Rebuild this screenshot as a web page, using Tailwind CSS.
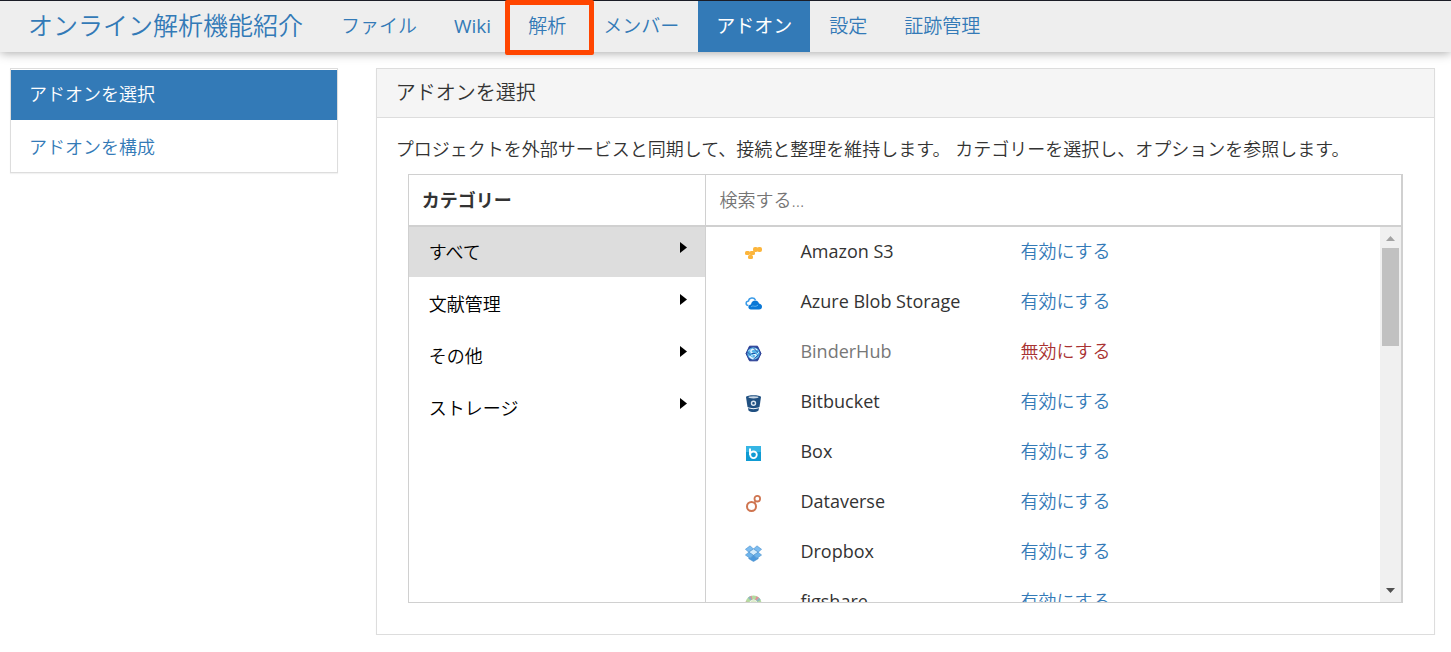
<!DOCTYPE html>
<html lang="ja">
<head>
    <meta charset="UTF-8">
    <meta name="viewport" content="width=device-width, initial-scale=1.0">
    <title>アドオンを選択</title>

    <!-- Tailwind CSS for styling -->
    <script src="https://cdn.jsdelivr.net/npm/@tailwindcss/browser@4"></script>
</head>
<body class="bg-white text-[#333] text-[18px] leading-6 font-[350] font-['Open_Sans','Noto_Sans_CJK_JP',sans-serif]">

    <!-- Project navbar -->
    <header class="relative border-t border-[#1a1c26] bg-[#eee] shadow-[0_1px_10px_rgba(0,0,0,0.35)]">
        <nav class="flex items-stretch h-[51px] text-[#337ab7] text-[19px]">
            <a href="#" class="flex items-center pl-7 pr-5 pb-[3px] text-[25px]">オンライン解析機能紹介</a>
            <div class="flex gap-px">
                <a href="#" class="flex items-center px-[18px] pb-0.5">ファイル</a>
                <a href="#" class="flex items-center px-[18px] pb-0.5 font-normal">Wiki</a>
                <a href="#" class="relative flex items-center px-[18px] pb-0.5">
                    解析
                    <span class="absolute -top-px -bottom-[3px] -left-[5px] -right-[10px] border-5 border-[#ff4500] rounded-xs"></span>
                </a>
                <a href="#" class="flex items-center px-[18px] pb-0.5">メンバー</a>
                <a href="#" class="flex items-center px-[18px] pb-0.5 bg-[#337ab7] text-white font-normal">アドオン</a>
                <a href="#" class="flex items-center px-[18px] pb-0.5">設定</a>
                <a href="#" class="flex items-center px-[18px] pb-0.5">証跡管理</a>
            </div>
        </nav>
    </header>

    <main class="grid grid-cols-[23%_1fr] gap-x-[38px] items-start pl-[10px] pr-4 pt-4">

        <!-- Sidebar -->
        <aside class="border border-[#ddd] pt-px shadow-[0_1px_1px_rgba(0,0,0,0.05)]">
            <a href="#" class="flex items-center h-[50px] px-[18px] pb-0.5 bg-[#337ab7] text-white">アドオンを選択</a>
            <a href="#" class="flex items-center h-[52px] px-[18px] pt-0.5 text-[#337ab7]">アドオンを構成</a>
        </aside>

        <!-- Add-on panel -->
        <section class="border border-[#ddd] shadow-[0_1px_1px_rgba(0,0,0,0.05)]">
            <h1 class="flex items-center h-[49px] px-[19px] bg-[#f5f5f5] border-b border-[#ddd] text-[20px]">アドオンを選択</h1>
            <div class="pt-[19px] pb-[31px] pl-[19px] pr-[31px]">
                <p>プロジェクトを外部サービスと同期して、接続と整理を維持します。 カテゴリーを選択し、オプションを参照します。</p>

                <div class="mt-[13px] ml-3 border border-r-2 border-[#d0d0d0]">
                    <div class="flex h-[52px] border-b-2 border-[#d0d0d0]">
                        <h2 class="flex items-center w-[30%] pl-[13px] font-bold border-r border-[#d0d0d0]">カテゴリー</h2>
                        <input type="text" aria-label="検索する" placeholder="検索する..." class="flex-1 px-[13px] placeholder-[#757575] focus:outline-none">
                    </div>

                    <div class="flex h-[375px]">
                        <!-- Categories -->
                        <ul class="flex flex-col gap-0.5 w-[30%] border-r border-[#d0d0d0] text-black">
                            <li>
                                <a href="#" class="flex items-center justify-between h-[50px] pl-5 pr-[18px] pb-px bg-[#ddd]">すべて
                                    <svg class="w-[7px] h-[11px] mb-2" viewBox="0 0 7 11"><path d="M0 0L7 5.5L0 11Z"/></svg>
                                </a>
                            </li>
                            <li>
                                <a href="#" class="flex items-center justify-between h-[50px] pl-5 pr-[18px] pb-px">文献管理
                                    <svg class="w-[7px] h-[11px] mb-2" viewBox="0 0 7 11"><path d="M0 0L7 5.5L0 11Z"/></svg>
                                </a>
                            </li>
                            <li>
                                <a href="#" class="flex items-center justify-between h-[50px] pl-5 pr-[18px] pb-px">その他
                                    <svg class="w-[7px] h-[11px] mb-2" viewBox="0 0 7 11"><path d="M0 0L7 5.5L0 11Z"/></svg>
                                </a>
                            </li>
                            <li>
                                <a href="#" class="flex items-center justify-between h-[50px] pl-5 pr-[18px] pb-px">ストレージ
                                    <svg class="w-[7px] h-[11px] mb-2" viewBox="0 0 7 11"><path d="M0 0L7 5.5L0 11Z"/></svg>
                                </a>
                            </li>
                        </ul>

                        <!-- Add-on list -->
                        <div class="flex-1 h-full overflow-hidden">
                            <table class="w-full">
                                <tbody>
                                    <tr class="h-[50px]">
                                        <td class="w-[94px] pl-[39px] pt-0.5">
                                            <svg class="w-[17px] h-[17px]" viewBox="0 0 17 17" fill="#fcb53b">
                                                <rect x="8" y="2" width="5" height="5" rx="2"/><rect x="12" y="2" width="5" height="5" rx="2"/>
                                                <rect x="0" y="6" width="5" height="4" rx="1.5"/><rect x="4.5" y="6" width="5.5" height="4" rx="1.5"/>
                                                <rect x="3" y="10" width="5" height="4" rx="1.5"/>
                                            </svg>
                                        </td>
                                        <th scope="row" class="w-[220px] pb-0.5 text-left font-medium">Amazon S3</th>
                                        <td class="pb-0.5"><a href="#" class="text-[#337ab7]">有効にする</a></td>
                                    </tr>
                                    <tr class="h-[50px]">
                                        <td class="pl-[39px] pt-0.5">
                                            <svg class="w-[17px] h-[17px]" viewBox="0 0 17 17">
                                                <path d="M3.5 10.5C.5 10.5 .2 6.5 3.5 6C4 2.5 9 2 10.5 5" fill="#fff" stroke="#3a9be8" stroke-width="1.5"/>
                                                <path d="M6 14.5C2.5 14.5 2.5 10 6 9.5C6.5 4.5 13 4 14 8.5C18 9 18 14.5 14 14.5Z" fill="#0a78d6"/>
                                                <path d="M6 12C8 9.5 10 13 13 10" fill="none" stroke="#5fb4f2"/>
                                            </svg>
                                        </td>
                                        <th scope="row" class="pb-0.5 text-left font-medium">Azure Blob Storage</th>
                                        <td class="pb-0.5"><a href="#" class="text-[#337ab7]">有効にする</a></td>
                                    </tr>
                                    <tr class="h-[50px]">
                                        <td class="pl-[39px] pt-0.5">
                                            <svg class="w-[17px] h-[17px]" viewBox="0 0 17 17">
                                                <path d="M4.5 1.2H12.5L16 8.5L12.5 15.8H4.5L1 8.5Z" fill="#2a3f96" stroke="#2a3f96"/>
                                                <circle cx="8.5" cy="8.5" r="6.2" fill="#55b2e6"/>
                                                <path d="M12 5C8 2.5 4.5 5.5 6.5 7.5S12.5 9 10.5 12S5.5 12.5 4.5 11" fill="none" stroke="#e4f5ff" stroke-width="1.5"/>
                                                <path d="M2.5 7L6 10.5M8.5 3L13.5 8M6.5 8.5L10.5 8.5M8.5 14L13.5 10" stroke="#2456a5" stroke-width="1"/>
                                                <path d="M3.5 6L5 4.5M12 9L14 7M6 10.5L8 11" stroke="#c4e8fa" stroke-width="1"/>
                                            </svg>
                                        </td>
                                        <th scope="row" class="pb-0.5 text-left font-medium text-[#777]">BinderHub</th>
                                        <td class="pb-0.5"><a href="#" class="text-[#a93232]">無効にする</a></td>
                                    </tr>
                                    <tr class="h-[50px]">
                                        <td class="pl-[39px] pt-0.5">
                                            <svg class="w-[17px] h-[17px]" viewBox="0 0 17 17">
                                                <path d="M1 2C2 -.3 15 -.3 16 2L14.5 12C12 13.5 5 13.5 2.5 12Z" fill="#205081"/>
                                                <path d="M3 13C6 14.5 11 14.5 14 13L13.5 15.5C11 17.5 6 17.5 3.5 15.5Z" fill="#205081"/>
                                                <ellipse cx="8.5" cy="2.3" rx="5" ry="1.1" fill="#c9d7e4"/>
                                                <circle cx="8.5" cy="8.3" r="2" fill="#205081" stroke="#dce6ef" stroke-width="1.4"/>
                                            </svg>
                                        </td>
                                        <th scope="row" class="pb-0.5 text-left font-medium">Bitbucket</th>
                                        <td class="pb-0.5"><a href="#" class="text-[#337ab7]">有効にする</a></td>
                                    </tr>
                                    <tr class="h-[50px]">
                                        <td class="pl-[39px] pt-0.5">
                                            <svg class="w-[17px] h-[17px]" viewBox="0 0 17 17">
                                                <rect x="1" y="1" width="15" height="15" fill="#0f9bd3"/>
                                                <rect x="1" y="1" width="15" height="6" fill="#35b5e4"/>
                                                <path d="M5 3.5V10" stroke="#fff" stroke-width="2"/>
                                                <circle cx="8.5" cy="9.8" r="3.3" fill="none" stroke="#fff" stroke-width="1.8"/>
                                            </svg>
                                        </td>
                                        <th scope="row" class="pb-0.5 text-left font-medium">Box</th>
                                        <td class="pb-0.5"><a href="#" class="text-[#337ab7]">有効にする</a></td>
                                    </tr>
                                    <tr class="h-[50px]">
                                        <td class="pl-[39px] pt-0.5">
                                            <svg class="w-[17px] h-[17px]" viewBox="0 0 17 17" fill="none" stroke="#cf7550">
                                                <circle cx="6.5" cy="11.5" r="4.5" stroke-width="2"/>
                                                <circle cx="12.3" cy="3.7" r="2.8" stroke-width="1.8"/>
                                                <path d="M9.3 8L10.5 6.3" stroke-width="1.6"/>
                                            </svg>
                                        </td>
                                        <th scope="row" class="pb-0.5 text-left font-medium">Dataverse</th>
                                        <td class="pb-0.5"><a href="#" class="text-[#337ab7]">有効にする</a></td>
                                    </tr>
                                    <tr class="h-[50px]">
                                        <td class="pl-[39px] pt-0.5">
                                            <svg class="w-[17px] h-[17px]" viewBox="0 0 17 17" stroke="#3f86c4" stroke-width=".5">
                                                <path d="M5 .8L8.5 4L3.8 7.2L.4 4.3Z" fill="#7cbcf0"/>
                                                <path d="M12 .8L8.5 4L13.2 7.2L16.6 4.3Z" fill="#7cbcf0"/>
                                                <path d="M8.5 4L13.2 7.2L8.5 10.4L3.8 7.2Z" fill="#d4ecfc"/>
                                                <path d="M3.8 7.2L8.5 10.4L5 13.3L.4 10Z" fill="#6db4ec"/>
                                                <path d="M13.2 7.2L8.5 10.4L12 13.3L16.6 10Z" fill="#6db4ec"/>
                                                <path d="M3.8 12.7L5 13.5L8.5 10.7L12 13.5L13.2 12.7V13.7L8.5 16.6L3.8 13.7Z" fill="#4a98dc"/>
                                            </svg>
                                        </td>
                                        <th scope="row" class="pb-0.5 text-left font-medium">Dropbox</th>
                                        <td class="pb-0.5"><a href="#" class="text-[#337ab7]">有効にする</a></td>
                                    </tr>
                                    <tr class="h-[50px]">
                                        <td class="pl-[39px] pt-0.5">
                                            <svg class="w-[17px] h-[17px]" viewBox="0 0 17 17" fill="none" stroke-width="4">
                                                <circle cx="8.5" cy="8.5" r="6" stroke="#b5dba0"/>
                                                <circle cx="8.5" cy="8.5" r="6" stroke="#e08f9b" stroke-dasharray="2 4"/>
                                                <circle cx="8.5" cy="8.5" r="6" stroke="#8fb9bd" stroke-dasharray="2 7" stroke-dashoffset="4"/>
                                                <circle cx="8.5" cy="8.5" r="2.5" stroke="#dcebc9" stroke-width="2"/>
                                            </svg>
                                        </td>
                                        <th scope="row" class="pb-0.5 text-left font-medium">figshare</th>
                                        <td class="pb-0.5"><a href="#" class="text-[#337ab7]">有効にする</a></td>
                                    </tr>
                                </tbody>
                            </table>
                        </div>

                        <!-- Scrollbar -->
                        <div class="flex flex-col items-center w-[21px] bg-[#f0f0f0]" aria-hidden="true">
                            <svg class="w-[9px] h-[21px] shrink-0" viewBox="0 0 9 21" fill="#a3a3a3"><path d="M0 14L4.5 9L9 14Z"/></svg>
                            <div class="w-[17px] h-[98px] bg-[#c1c1c1]"></div>
                            <svg class="w-[9px] h-[21px] shrink-0 mt-auto" viewBox="0 0 9 21" fill="#505050"><path d="M0 7L4.5 12L9 7Z"/></svg>
                        </div>
                    </div>
                </div>
            </div>
        </section>
    </main>

</body>
</html>
